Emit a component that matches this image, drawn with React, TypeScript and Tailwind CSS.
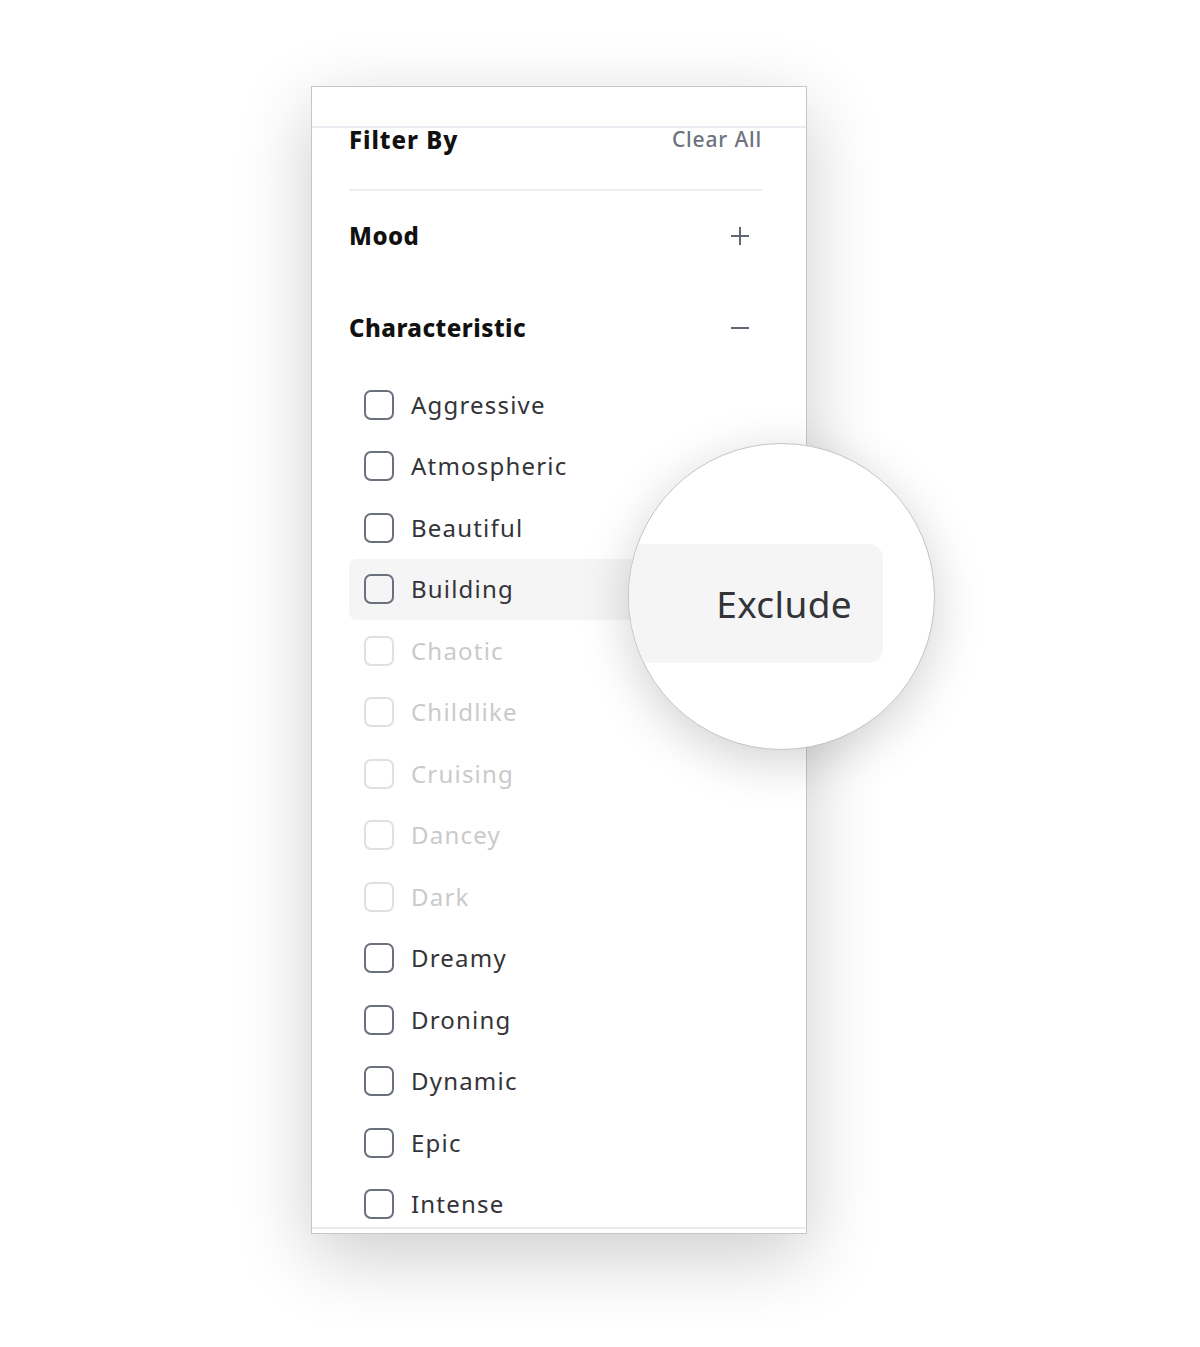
import React from 'react';

type Item = { label: string; disabled?: boolean; hovered?: boolean };

const items: Item[] = [
  { label: 'Aggressive' },
  { label: 'Atmospheric' },
  { label: 'Beautiful' },
  { label: 'Building', hovered: true },
  { label: 'Chaotic', disabled: true },
  { label: 'Childlike', disabled: true },
  { label: 'Cruising', disabled: true },
  { label: 'Dancey', disabled: true },
  { label: 'Dark', disabled: true },
  { label: 'Dreamy' },
  { label: 'Droning' },
  { label: 'Dynamic' },
  { label: 'Epic' },
  { label: 'Intense' },
];

const font = { fontFamily: '"Noto Sans", Lato, sans-serif' };

const PlusIcon = () => (
  <svg width="20" height="20" viewBox="0 0 20 20" className="text-[#5f6673]">
    <path d="M10 1v18M1 10h18" stroke="currentColor" strokeWidth="2" />
  </svg>
);

const MinusIcon = () => (
  <svg width="20" height="20" viewBox="0 0 20 20" className="text-[#5f6673]">
    <path d="M1 10h18" stroke="currentColor" strokeWidth="2" />
  </svg>
);

const CheckRow: React.FC<{ item: Item }> = ({ item }) => (
  <div
    className={`flex h-[61.5px] items-center gap-[17px] rounded-lg pl-[15px] ${
      item.hovered ? 'bg-[#f5f5f5]' : ''
    }`}
  >
    <span
      className={`h-[30px] w-[30px] shrink-0 rounded-[7px] border-2 ${
        item.disabled ? 'border-[#dfe0e3]' : 'border-[#6b717c]'
      }`}
    />
    <span
      className={`text-[24px] leading-none tracking-[0.05em] ${
        item.disabled ? 'text-[#c9cacc]' : 'text-[#333438]'
      }`}
    >
      {item.label}
    </span>
  </div>
);

export default function App() {
  return (
    <div className="relative h-[1347px] w-[1200px] overflow-hidden bg-white" style={font}>
      <div className="ml-[311px] mt-[86px] flex h-[1148px] w-[496px] flex-col overflow-hidden border border-[#c6c6c6] bg-white shadow-[0_22px_70px_rgba(0,0,0,0.2)]">
        <div className="h-[39px] shrink-0" />
        <div className="h-0 shrink-0 border-t-2 border-[#e9ecf1]" />
        <div className="flex-1 overflow-hidden pl-[37px] pr-[44px]">
          <div className="flex h-[23px] items-center justify-between">
            <span className="text-[24px] font-extrabold leading-none tracking-[0.04em] text-[#111]">
              Filter By
            </span>
            <span className="text-[21px] font-medium leading-none tracking-[0.04em] text-[#6c7280]">
              Clear All
            </span>
          </div>
          <div className="mt-[38px] h-[2px] bg-[#eceef2]" />
          <div className="flex h-[90px] items-center justify-between pr-[12px]">
            <span className="text-[24px] font-extrabold leading-none tracking-[0.02em] text-[#111]">Mood</span>
            <PlusIcon />
          </div>
          <div className="flex h-[93px] items-center justify-between pr-[12px]">
            <span className="text-[24px] font-extrabold leading-none tracking-[0.02em] text-[#111]">
              Characteristic
            </span>
            <MinusIcon />
          </div>
          <div className="-mr-[44px] flex flex-col">
            {items.map((it) => (
              <CheckRow key={it.label} item={it} />
            ))}
          </div>
        </div>
        <div className="h-0 shrink-0 border-t-2 border-[#e9ecf1]" />
        <div className="h-[4px] shrink-0" />
      </div>

      {/* magnifier */}
      <div className="absolute left-[628px] top-[443px] h-[307px] w-[307px] overflow-hidden rounded-full border border-[#c4c4c4] bg-white shadow-[0_12px_50px_rgba(0,0,0,0.18)]">
        <div className="absolute left-[-60px] top-[100px] flex h-[119px] w-[314px] items-center justify-end rounded-[14px] bg-[#f5f5f5] pr-[31px]">
          <span className="text-[37px] leading-none tracking-[0.01em] text-[#333438]">Exclude</span>
        </div>
      </div>
    </div>
  );
}
